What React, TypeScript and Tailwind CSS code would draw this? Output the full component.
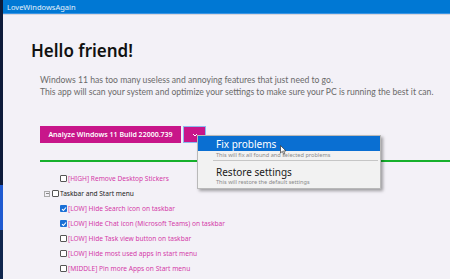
import React from 'react';

const font = { fontFamily: '"Noto Sans", "Open Sans", sans-serif' };

const items = [
  { label: '[LOW] Hide Search icon on taskbar', checked: true },
  { label: '[LOW] Hide Chat icon (Microsoft Teams) on taskbar', checked: true },
  { label: '[LOW] Hide Task view button on taskbar', checked: false },
  { label: '[LOW] Hide most used apps in start menu', checked: false },
  { label: '[MIDDLE] Pin more Apps on Start menu', checked: false },
];

function Box({ checked }: { checked?: boolean }) {
  if (checked) {
    return (
      <span className="flex w-[7px] h-[7px] items-center justify-center rounded-[1px] bg-[#1a6fd6]">
        <svg width="6" height="6" viewBox="0 0 6 6" fill="none" stroke="white" strokeWidth="1.1">
          <path d="M1 3.2 L2.4 4.5 L5 1.5" />
        </svg>
      </span>
    );
  }
  return <span className="block w-[7px] h-[7px] border border-[#555] bg-white rounded-[1px]" />;
}

export default function App() {
  return (
    <div className="w-[450px] h-[279px] flex overflow-hidden bg-[#f3f1f7]" style={font}>
      <div className="w-[3px] h-full flex flex-col shrink-0">
        <div className="h-[185px] bg-[#0d1b3a]" />
        <div className="h-[45px] bg-[#1f5ad0]" />
        <div className="flex-1 bg-[#10264d]" />
      </div>
      <div className="flex-1 flex flex-col relative">
        <div className="h-[14px] shrink-0 bg-[#0078d4] border-b border-[#3a95e4] flex items-center pl-[4px]">
          <span className="text-[7.5px] leading-[10px] text-white/90">LoveWindowsAgain</span>
        </div>
        <div className="h-px shrink-0 bg-[#d8d6dc]" />
        <div className="flex flex-col shrink-0 pl-[28px]">
          <h1 className="mt-[26px] text-[17px] leading-[20px] font-semibold text-[#111]">Hello friend!</h1>
          <div className="mt-[13px] pl-[9px] text-[8.6px] leading-[12px] text-[#6a6a6a] whitespace-nowrap font-['Lato',sans-serif]">
            <p>Windows 11 has too many useless and annoying features that just need to go.</p>
            <p>This app will scan your system and optimize your settings to make sure your PC is running the best it can.</p>
          </div>
          <div className="mt-[28px] pl-[9px] flex items-center gap-[2px]">
            <button className="w-[141px] h-[17px] bg-[#c8168a] text-white text-[7px] font-semibold leading-none">
              Analyze Windows 11 Build 22000.739
            </button>
            <button className="w-[23px] h-[17px] bg-[#c8168a] border border-[#8cb8ee] flex items-center justify-center">
              <svg width="6" height="4" viewBox="0 0 6 4" fill="none" stroke="white" strokeWidth="1">
                <path d="M1 1 L3 3 L5 1" />
              </svg>
            </button>
          </div>
          <div className="mt-[17px] ml-[9px] h-[2px] bg-[#16b02c]" />
          <div className="mt-[9px] pl-[9px] flex flex-col text-[6.6px] leading-[15px]">
            <div className="flex items-center gap-[1px] pl-[20px]">
              <Box />
              <span className="text-[#d43aa8]">[HIGH] Remove Desktop Stickers</span>
            </div>
            <div className="flex items-center gap-[1px] pl-[4px]">
              <span className="w-[6px] h-[6px] border border-[#aaa] flex items-center justify-center mr-[1px]">
                <span className="block w-[3px] h-px bg-[#888]" />
              </span>
              <Box />
              <span className="text-[#222]">Taskbar and Start menu</span>
            </div>
            {items.map((it) => (
              <div key={it.label} className="flex items-center gap-[1px] pl-[20px]">
                <Box checked={it.checked} />
                <span className="text-[#d43aa8]">{it.label}</span>
              </div>
            ))}
          </div>
        </div>

        {/* dropdown menu */}
        <div className="absolute left-[194px] top-[135px] w-[184px] h-[54px] bg-[#f2f2f2] border border-[#b9b9b9] shadow-[2px_2px_3px_rgba(0,0,0,0.35)] flex flex-col">
          <div className="h-[15px] bg-[#0a6fd2] flex items-center pl-[18px]">
            <span className="text-[10px] leading-none text-white">Fix problems</span>
          </div>
          <div className="pl-[18px] text-[5.6px] leading-[9px] text-[#8a8a8a]">This will fix all found and selected problems</div>
          <div className="ml-[15px] mr-[2px] h-px bg-[#c6c6c6]" />
          <div className="pl-[18px] mt-[5px] text-[10px] leading-[12px] text-[#1a1a1a]">Restore settings</div>
          <div className="pl-[18px] text-[5.6px] leading-[9px] text-[#8a8a8a]">This will restore the default settings</div>
        </div>
        <svg className="absolute left-[277px] top-[145px]" width="7" height="10" viewBox="0 0 7 10">
          <path d="M0.5 0.5 L0.5 8 L2.3 6.3 L3.6 9.2 L4.8 8.7 L3.6 5.9 L6 5.9 Z" fill="white" stroke="#333" strokeWidth="0.7" />
        </svg>
      </div>
    </div>
  );
}
